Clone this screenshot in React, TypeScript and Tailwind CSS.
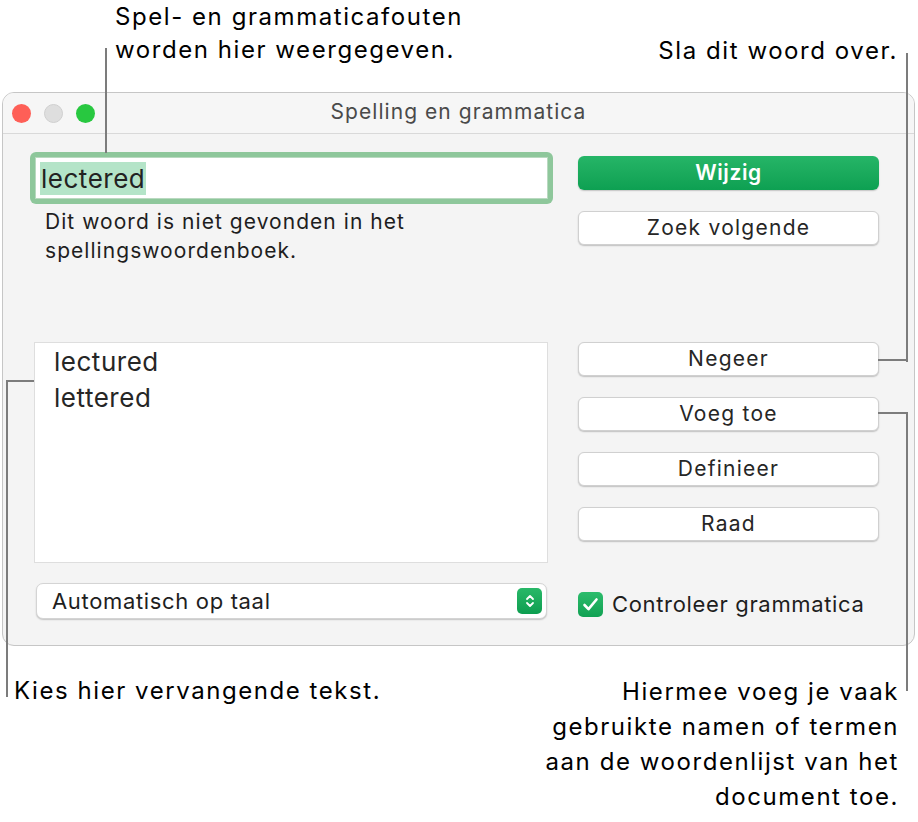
import React from "react";

const font = { fontFamily: "Inter, 'Noto Sans', sans-serif" };

function MacButton({ label }: { label: string }) {
  return (
    <button className="flex h-[34px] w-full items-center justify-center rounded-[6px] border-[0.5px] border-[#d0d0d0] bg-white text-[21px] tracking-[0.06em] text-[#262626] shadow-[0_1px_1.5px_rgba(0,0,0,0.22)]">
      {label}
    </button>
  );
}

function Stepper() {
  return (
    <span className="flex h-[26px] w-[25px] items-center justify-center rounded-[5px] bg-gradient-to-b from-[#28b868] to-[#0c9e50]">
      <svg width="12" height="18" viewBox="0 0 12 18" fill="none">
        <path d="M3 7l3-3 3 3" stroke="white" strokeWidth="1.8" strokeLinecap="round" strokeLinejoin="round" />
        <path d="M3 11l3 3 3-3" stroke="white" strokeWidth="1.8" strokeLinecap="round" strokeLinejoin="round" />
      </svg>
    </span>
  );
}

function Checkbox() {
  return (
    <span className="flex h-[25px] w-[25px] shrink-0 items-center justify-center rounded-[5px] bg-gradient-to-b from-[#2cbc6c] to-[#10a153]">
      <svg width="17" height="15" viewBox="0 0 17 15" fill="none">
        <path d="M2.5 8l4 4.2L14.5 2.5" stroke="white" strokeWidth="2.6" strokeLinecap="round" strokeLinejoin="round" />
      </svg>
    </span>
  );
}

export default function App() {
  return (
    <div className="relative h-[822px] w-[918px] overflow-hidden bg-white" style={font}>
      {/* window */}
      <div className="ml-[2px] mt-[92px] flex h-[554px] w-[913px] flex-col overflow-hidden rounded-[12px] border border-[#c6c6c6] bg-[#f4f4f4]">
        <div className="relative flex h-[41px] shrink-0 items-center border-b border-[#d9d9d9] bg-[#f6f6f6] pl-[9px]">
          <div className="flex gap-[13px]">
            <span className="h-[19px] w-[19px] rounded-full bg-[#fe5f57]" />
            <span className="h-[19px] w-[19px] rounded-full border border-[#cfcfcf] bg-[#dedede]" />
            <span className="h-[19px] w-[19px] rounded-full bg-[#28c840]" />
          </div>
          <div className="absolute inset-0 flex items-center justify-center pb-[3px] text-[21px] tracking-[0.05em] text-[#4a4a4a]">
            Spelling en grammatica
          </div>
        </div>

        <div className="flex flex-1 pl-[27px]">
          {/* left column */}
          <div className="flex w-[523px] flex-col">
            <div className="mt-[18px] h-[52px] rounded-[6px] bg-[#8ec79b] p-[5px]">
              <div className="flex h-full items-center border border-[#b9d9c0] bg-white pl-[4px]">
                <span className="bg-[#b4e4c8] px-[1px] text-[26px] leading-[33px] tracking-[0.02em] text-[#222]">lectered</span>
              </div>
            </div>
            <p className="ml-[15px] mt-[3px] text-[21px] leading-[29px] tracking-[0.05em] text-[#1e1e1e]">
              Dit woord is niet gevonden in het
              <br />
              spellingswoordenboek.
            </p>
            <div className="ml-[4px] mt-[77px] h-[221px] w-[514px] border border-[#dedede] bg-white pl-[19px] pt-[1px] text-[26px] leading-[36px] tracking-[0.02em] text-[#262626]">
              <div>lectured</div>
              <div>lettered</div>
            </div>
            <div className="ml-[6px] mt-[20px] flex h-[36px] w-[511px] items-center justify-between rounded-[7px] border-[0.5px] border-[#d4d4d4] bg-white pl-[15px] pr-[4px] text-[22px] tracking-[0.03em] text-[#1e1e1e] shadow-[0_1px_1.5px_rgba(0,0,0,0.2)]">
              <span>Automatisch op taal</span>
              <Stepper />
            </div>
          </div>

          {/* right column */}
          <div className="ml-[25px] flex w-[301px] flex-col">
            <button className="mt-[22px] flex h-[34px] w-full items-center justify-center rounded-[6px] bg-gradient-to-b from-[#25b567] to-[#0da052] text-[21px] font-semibold tracking-[0.03em] text-white shadow-[0_1px_1.5px_rgba(0,0,0,0.2)]">
              Wijzig
            </button>
            <div className="mt-[21px]">
              <MacButton label="Zoek volgende" />
            </div>
            <div className="mt-[97px] flex flex-col gap-[21px]">
              <MacButton label="Negeer" />
              <MacButton label="Voeg toe" />
              <MacButton label="Definieer" />
              <MacButton label="Raad" />
            </div>
            <label className="mt-[47px] flex items-center gap-[9px] text-[22px] tracking-[0.03em] text-[#1e1e1e]">
              <Checkbox />
              Controleer grammatica
            </label>
          </div>
        </div>
      </div>

      {/* annotations */}
      <p className="absolute left-[115px] top-0 text-[24px] leading-[33px] tracking-[0.065em] text-black">
        Spel- en grammaticafouten
        <br />
        worden hier weergegeven.
      </p>
      <p className="absolute right-[20px] top-[34px] text-[24px] leading-[33px] tracking-[0.065em] text-black">Sla dit woord over.</p>
      <p className="absolute left-[14px] top-[674px] text-[24px] leading-[33px] tracking-[0.065em] text-black">Kies hier vervangende tekst.</p>
      <p className="absolute right-[19px] top-[674px] text-right text-[24px] leading-[35px] tracking-[0.065em] text-black">
        Hiermee voeg je vaak
        <br />
        gebruikte namen of termen
        <br />
        aan de woordenlijst van het
        <br />
        document toe.
      </p>

      {/* callout lines */}
      <div className="absolute left-[105px] top-[48px] h-[105px] w-[2px] bg-[#7c7c7c]" />
      <div className="absolute left-[906px] top-[53px] h-[309px] w-[2px] bg-[#7c7c7c]" />
      <div className="absolute left-[878px] top-[359px] h-[2px] w-[30px] bg-[#7c7c7c]" />
      <div className="absolute left-[6px] top-[380px] h-[317px] w-[2px] bg-[#7c7c7c]" />
      <div className="absolute left-[6px] top-[380px] h-[2px] w-[28px] bg-[#7c7c7c]" />
      <div className="absolute left-[878px] top-[412px] h-[2px] w-[30px] bg-[#7c7c7c]" />
      <div className="absolute left-[906px] top-[412px] h-[279px] w-[2px] bg-[#7c7c7c]" />
    </div>
  );
}
